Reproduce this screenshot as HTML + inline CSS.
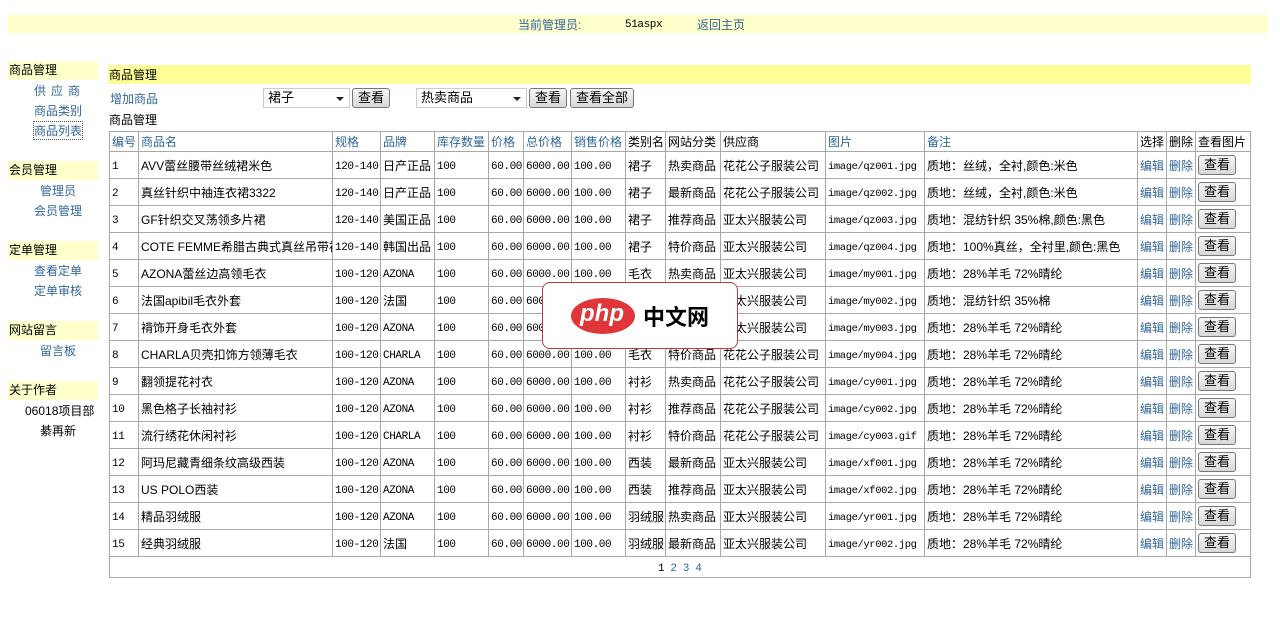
<!DOCTYPE html>
<html><head><meta charset="utf-8"><style>
*{margin:0;padding:0;box-sizing:border-box}
body{width:1280px;height:630px;background:#fff;font-family:"Liberation Sans","Noto Sans CJK SC",sans-serif;font-size:12px;color:#000;position:relative;overflow:hidden}
.a{position:absolute;white-space:nowrap}
.blue{color:#336699}
.top{left:8px;top:15px;width:1260px;height:18px;background:#ffffcc}
.side h{position:absolute;left:8px;width:90px;height:19px;background:#ffffcc;font-size:12px;line-height:19px;padding-left:1px}
.side a{position:absolute;color:#336699;font-size:12px;text-decoration:none}
.mono{font-family:"Liberation Mono","Noto Sans CJK SC",monospace;font-size:11px;letter-spacing:-0.4px}
td.mono{padding-top:4px}
table{position:absolute;left:109px;top:131px;border-collapse:collapse;table-layout:fixed;width:1141px}
td{border:1px solid #a8a8a8;height:27px;padding:0 0 0 2px;white-space:nowrap;overflow:hidden;font-size:12px;vertical-align:middle}
tr.h td{height:20px}
.btn{display:inline-block;border:1px solid #777;border-radius:3px;background:linear-gradient(#f6f6f6,#d8d8d8);padding:0 5px;height:20px;line-height:18px;font-size:13px}
.sel{position:absolute;height:20px;border:1px solid #ccc;background:#fff;font-size:13px;line-height:18px;padding-left:4px}
.sel:after{content:"";position:absolute;right:5px;top:8px;border:4px solid transparent;border-top:4px solid #222}
</style></head><body>
<div class="a top"></div>
<div class="a blue" style="left:518px;top:16px;font-size:12px">当前管理员:</div>
<div class="a mono" style="left:625px;top:19px">51aspx</div>
<div class="a blue" style="left:697px;top:16px;font-size:12px">返回主页</div>

<div class="side">
<h style="top:61px">商品管理</h>
<a style="left:34px;top:82px;letter-spacing:5px">供应商</a>
<a style="left:34px;top:102px">商品类别</a>
<a style="left:34px;top:122px;outline:1px dotted #555">商品列表</a>
<h style="top:161px">会员管理</h>
<a style="left:40px;top:182px">管理员</a>
<a style="left:34px;top:202px">会员管理</a>
<h style="top:241px">定单管理</h>
<a style="left:34px;top:262px">查看定单</a>
<a style="left:34px;top:282px">定单审核</a>
<h style="top:321px">网站留言</h>
<a style="left:40px;top:342px">留言板</a>
<h style="top:381px">关于作者</h>
<div class="a" style="left:25px;top:402px;font-size:12px">06018项目部</div>
<div class="a" style="left:40px;top:422px;font-size:12px">綦再新</div>
</div>

<div class="a" style="left:108px;top:65px;width:1143px;height:19px;background:#ffff99"></div>
<div class="a" style="left:109px;top:66px">商品管理</div>
<div class="a blue" style="left:110px;top:90px">增加商品</div>
<div class="sel" style="left:263px;top:88px;width:87px">裙子</div>
<span class="a btn" style="left:352px;top:88px">查看</span>
<div class="sel" style="left:416px;top:88px;width:111px">热卖商品</div>
<span class="a btn" style="left:529px;top:88px">查看</span>
<span class="a btn" style="left:570px;top:88px">查看全部</span>
<div class="a" style="left:109px;top:111px">商品管理</div>

<table>
<colgroup><col style="width:29px"><col style="width:194px"><col style="width:48px"><col style="width:54px"><col style="width:54px"><col style="width:35px"><col style="width:48px"><col style="width:54px"><col style="width:40px"><col style="width:55px"><col style="width:105px"><col style="width:99px"><col style="width:213px"><col style="width:29px"><col style="width:29px"><col style="width:55px"></colgroup>
<tr class="h blue"><td>编号</td><td>商品名</td><td>规格</td><td>品牌</td><td>库存数量</td><td>价格</td><td>总价格</td><td>销售价格</td><td style="color:#000">类别名</td><td style="color:#000">网站分类</td><td style="color:#000">供应商</td><td>图片</td><td>备注</td><td style="color:#000">选择</td><td style="color:#000">删除</td><td style="color:#000">查看图片</td></tr>
<tbody id="b"></tbody>
<tr><td colspan="16" style="height:21px;padding-left:548px"><span class="mono">1 <span class="blue">2 3 4</span></span></td></tr>
</table>
<script>
var d=[
["AVV蕾丝腰带丝绒裙米色","120-140","日产正品","裙子","热卖商品","花花公子服装公司","qz001.jpg","质地：丝绒，全衬,颜色:米色"],
["真丝针织中袖连衣裙3322","120-140","日产正品","裙子","最新商品","花花公子服装公司","qz002.jpg","质地：丝绒，全衬,颜色:米色"],
["GF针织交叉荡领多片裙","120-140","美国正品","裙子","推荐商品","亚太兴服装公司","qz003.jpg","质地：混纺针织 35%棉,颜色:黑色"],
["COTE FEMME希腊古典式真丝吊带裙","120-140","韩国出品","裙子","特价商品","亚太兴服装公司","qz004.jpg","质地：100%真丝，全衬里,颜色:黑色"],
["AZONA蕾丝边高领毛衣","100-120","AZONA","毛衣","热卖商品","亚太兴服装公司","my001.jpg","质地：28%羊毛 72%晴纶"],
["法国apibil毛衣外套","100-120","法国","毛衣","最新商品","亚太兴服装公司","my002.jpg","质地：混纺针织 35%棉"],
["褙饰开身毛衣外套","100-120","AZONA","毛衣","推荐商品","亚太兴服装公司","my003.jpg","质地：28%羊毛 72%晴纶"],
["CHARLA贝壳扣饰方领薄毛衣","100-120","CHARLA","毛衣","特价商品","花花公子服装公司","my004.jpg","质地：28%羊毛 72%晴纶"],
["翻领提花衬衣","100-120","AZONA","衬衫","热卖商品","花花公子服装公司","cy001.jpg","质地：28%羊毛 72%晴纶"],
["黑色格子长袖衬衫","100-120","AZONA","衬衫","推荐商品","花花公子服装公司","cy002.jpg","质地：28%羊毛 72%晴纶"],
["流行绣花休闲衬衫","100-120","CHARLA","衬衫","特价商品","花花公子服装公司","cy003.gif","质地：28%羊毛 72%晴纶"],
["阿玛尼藏青细条纹高级西装","100-120","AZONA","西装","最新商品","亚太兴服装公司","xf001.jpg","质地：28%羊毛 72%晴纶"],
["US POLO西装","100-120","AZONA","西装","推荐商品","亚太兴服装公司","xf002.jpg","质地：28%羊毛 72%晴纶"],
["精品羽绒服","100-120","AZONA","羽绒服","热卖商品","亚太兴服装公司","yr001.jpg","质地：28%羊毛 72%晴纶"],
["经典羽绒服","100-120","法国","羽绒服","最新商品","亚太兴服装公司","yr002.jpg","质地：28%羊毛 72%晴纶"]];
var h="";
d.forEach(function(r,i){var br=/^[A-Z]+$/.test(r[2])?'<td class="mono">'+r[2]+'</td>':'<td>'+r[2]+'</td>';
h+='<tr><td class="mono">'+(i+1)+'</td><td>'+r[0]+'</td><td class="mono">'+r[1]+'</td>'+br+'<td class="mono">100</td><td class="mono">60.00</td><td class="mono">6000.00</td><td class="mono">100.00</td><td>'+r[3]+'</td><td>'+r[4]+'</td><td>'+r[5]+'</td><td class="mono" style="font-size:10.5px">image/'+r[6]+'</td><td>'+r[7]+'</td><td class="blue">编辑</td><td class="blue">删除</td><td><span class="btn">查看</span></td></tr>';});
document.getElementById("b").innerHTML=h;
</script>
<div class="a" style="left:542px;top:282px;width:196px;height:67px;background:#fff;border:1px solid #c0393b;border-radius:8px"></div>
<div class="a" style="left:571px;top:298px;width:64px;height:36px;border-radius:50%;background:#e0363a"></div>
<div class="a" style="left:580px;top:300px;color:#fff;font-size:24px;font-weight:bold;font-style:italic;font-family:'Liberation Sans',sans-serif">php</div>
<div class="a" style="left:643px;top:302px;font-size:22px;font-weight:bold;font-family:'Noto Sans CJK SC',sans-serif;line-height:28px">中文网</div>
</body></html>
